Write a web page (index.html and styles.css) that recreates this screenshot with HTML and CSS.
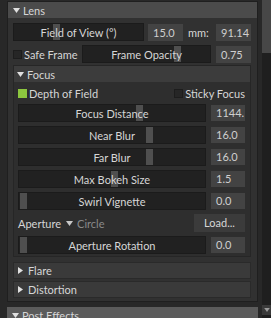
FILE: index.html
```html
<!DOCTYPE html>
<html lang="en">
<head>
  <meta charset="UTF-8" />
  <title>Lens</title>
  <link rel="stylesheet" href="styles.css">
</head>
<body>
  <div class="app">
    <div class="panels">
      <section class="lens">
        <div class="hdr"><svg class="tri" viewBox="0 0 7 5"><polygon points="0,0 7,0 3.5,5"/></svg>Lens</div>
        <div class="lens-body">
          <div class="row">
            <div class="slider fov"><span class="tick" style="left:39px"></span><span class="lbl">Field of View (°)</span></div>
            <div class="num">15.0</div>
            <span class="unit">mm:</span>
            <div class="num">91.14</div>
          </div>
          <div class="row">
            <div class="check"><span class="box"></span>Safe Frame</div>
            <div class="slider opacity"><span class="tick" style="left:91px"></span><span class="lbl">Frame Opacity</span></div>
            <div class="num">0.75</div>
          </div>

          <section class="sub">
            <div class="subhdr"><svg class="tri" viewBox="0 0 7 5"><polygon points="0,0 7,0 3.5,5"/></svg>Focus</div>
            <div class="sub-body">
              <div class="dof">
                <div class="check"><span class="box on"></span>Depth of Field</div>
                <div class="check"><span class="box"></span>Sticky Focus</div>
              </div>
              <div class="frow">
                <div class="slider"><span class="tick" style="left:117px"></span><span class="lbl">Focus Distance</span></div>
                <div class="num">1144.</div>
              </div>
              <div class="frow">
                <div class="slider"><span class="tick" style="left:127px"></span><span class="lbl">Near Blur</span></div>
                <div class="num">16.0</div>
              </div>
              <div class="frow">
                <div class="slider"><span class="tick" style="left:127px"></span><span class="lbl">Far Blur</span></div>
                <div class="num">16.0</div>
              </div>
              <div class="frow">
                <div class="slider"><span class="tick" style="left:92px"></span><span class="lbl">Max Bokeh Size</span></div>
                <div class="num">1.5</div>
              </div>
              <div class="frow">
                <div class="slider"><span class="tick" style="left:1px"></span><span class="lbl">Swirl Vignette</span></div>
                <div class="num">0.0</div>
              </div>
              <div class="frow aperture">
                <span>Aperture</span>
                <svg class="tri small" viewBox="0 0 7 5"><polygon points="0,0 7,0 3.5,5"/></svg>
                <span class="dim">Circle</span>
                <div class="btn">Load...</div>
              </div>
              <div class="frow">
                <div class="slider"><span class="tick" style="left:1px"></span><span class="lbl">Aperture Rotation</span></div>
                <div class="num">0.0</div>
              </div>
            </div>
          </section>

          <div class="closed first"><svg class="tri right" viewBox="0 0 5 7"><polygon points="0,0 5,3.5 0,7"/></svg>Flare</div>
          <div class="closed"><svg class="tri right" viewBox="0 0 5 7"><polygon points="0,0 5,3.5 0,7"/></svg>Distortion</div>
        </div>
      </section>
      <div class="hdr post"><svg class="tri" viewBox="0 0 7 5"><polygon points="0,0 7,0 3.5,5"/></svg>Post Effects</div>
    </div>
    <div class="scroll">
      <div class="thumb"></div>
      <div class="track"></div>
      <div class="arrow"><svg viewBox="0 0 7 5"><polygon points="0,0 7,0 3.5,5"/></svg></div>
    </div>
  </div>
</body>
</html>
```

FILE: styles.css
```css
body { margin: 0; background: #282828; font-family: "Lato", sans-serif; font-size: 11px; color: #d6d6d6; }
.app { display: flex; width: 271px; height: 318px; overflow: hidden; }
.panels { width: 258px; padding: 1px 0 0 7px; box-sizing: border-box; }
.lens { border: 1px solid #1f1f1f; background: #313131; }
.hdr { height: 16px; background: #4b4b4b; display: flex; align-items: center; padding-left: 5px; }
.hdr.post { margin-top: 5px; background: #5b5b5b; }
.tri { width: 7px; height: 5px; margin-right: 3px; fill: #e0e0e0; flex: none; }
.tri.right { width: 5px; height: 7px; margin-right: 5px; }
.tri.small { margin: 0 4px 0 5px; fill: #c8c8c8; }

.lens-body { padding: 5px 6px 3px 5px; }
.row { display: flex; align-items: center; height: 18px; }
.row + .row { margin-top: 4px; }

.slider { position: relative; height: 18px; background: #212121; display: flex; align-items: center; justify-content: center; box-sizing: border-box; border: 1px solid #1b1b1b; }
.tick { position: absolute; top: 0; bottom: 0; width: 7px; background: #4f4f4f; }
.lbl { position: relative; white-space: nowrap; }
.fov { width: 131px; margin-right: 4px; }
.opacity { width: 129px; margin-right: 5px; }
.num { width: 35px; height: 17px; line-height: 17px; background: #434343; padding-left: 5px; box-sizing: border-box; color: #cfcfcf; flex: none; }
.unit { width: 23px; margin: 0 5px; }

.check { display: flex; align-items: center; white-space: nowrap; }
.row .check { width: 69px; flex: none; }
.box { width: 9px; height: 9px; background: #262626; border: 1px solid #1d1d1d; box-sizing: border-box; margin-right: 2px; }
.box.on { background: #8cc63f; border-color: #8cc63f; }

.sub { margin-top: 2px; border: 1px solid #262626; background: #2e2e2e; }
.subhdr { height: 16px; background: #3c3c3c; display: flex; align-items: center; padding-left: 3px; }
.sub-body { padding: 0 5px 2px 4px; }
.dof { display: flex; justify-content: space-between; align-items: center; height: 22px; }
.frow { display: flex; align-items: center; height: 18px; margin-bottom: 4px; }
.frow:last-child { margin-bottom: 0; }
.frow .slider { width: 188px; margin-right: 5px; }
.frow .num { width: 34px; height: 16px; line-height: 16px; }
.dim { color: #8a8a8a; }
.btn { margin-left: auto; width: 51px; height: 18px; line-height: 18px; background: #3b3b3b; text-align: center; }

.closed { height: 17px; box-sizing: border-box; background: #3a3a3a; display: flex; align-items: center; padding-left: 4px; margin-top: 2px; border: 1px solid #2a2a2a; }
.closed.first { margin-top: 5px; }

.scroll { width: 9px; margin-left: 4px; display: flex; flex-direction: column; background: #1f1f1f; }
.thumb { height: 53px; background: #474747; }
.track { flex: 1; }
.arrow { height: 10px; margin-bottom: 3px; background: #3a3a3a; display: flex; align-items: center; justify-content: center; }
.arrow svg { width: 6px; height: 4px; fill: #9a9a9a; }
```
